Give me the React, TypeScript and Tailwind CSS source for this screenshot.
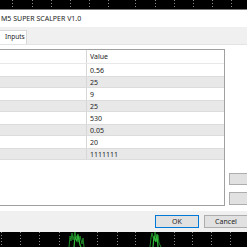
const rows = ['0.56', '25', '9', '25', '530', '0.05', '20', '1111111'];

const topLines = [12, 32, 51, 70, 89, 108, 135, 155, 174, 193, 212, 231];
const bottomLines = [1, 20, 39, 59, 97, 117, 135, 174, 192, 211, 230];

function TopBand() {
  return (
    <svg width="247" height="9" className="block shrink-0">
      <rect width="247" height="9" fill="#000" />
      {topLines.map((x) => (
        <line key={x} x1={x + 0.5} y1="0" x2={x + 0.5} y2="9" stroke="#8a8a8a" strokeDasharray="1 2" />
      ))}
    </svg>
  );
}

function Chart() {
  return (
    <svg width="247" height="15" className="block shrink-0">
      <rect width="247" height="15" fill="#000" />
      {bottomLines.map((x) => (
        <line key={x} x1={x + 0.5} y1="0" x2={x + 0.5} y2="15" stroke="#8a8a8a" strokeDasharray="1 2" />
      ))}
      <polyline points="69,15 70,4 71,9 72,1 73,8 75,0 76,6 78,2 79,10 80,4 82,12 83,6 84,15" fill="none" stroke="#1f8a28" strokeWidth="1" />
      <polyline points="74,15 75,5 77,9 78,3 80,13 81,15" fill="none" stroke="#2fb83a" strokeWidth="1.2" />
      <polyline points="150,15 151,6 152,1 154,9 155,0 156,7 158,3 159,11 161,15" fill="none" stroke="#1f8a28" strokeWidth="1" />
      <polyline points="153,15 154,4 156,10 157,2 158,15" fill="none" stroke="#2fb83a" strokeWidth="1.2" />
    </svg>
  );
}

export default function App() {
  return (
    <div className="w-[247px] h-[247px] overflow-hidden bg-black flex flex-col font-['Noto_Sans',sans-serif] text-[#1e1e1e]">
      <TopBand />
      <div className="h-px shrink-0 bg-[#7a7a7a]" />
      <div className="h-[17px] shrink-0 bg-white flex items-center pl-px text-[7px] leading-none">
        M5 SUPER SCALPER V1.0
      </div>
      <div className="h-[17px] shrink-0 bg-[#f0f0f0] flex items-end">
        <div className="h-[14px] w-[27px] bg-white border-t border-r border-[#d9d9d9] flex items-center pl-[5px] text-[6.5px] leading-none">
          Inputs
        </div>
      </div>
      <div className="flex-1 bg-white flex pt-[4px] border-t border-[#e3e3e3]">
        <div className="w-[225px] h-[157px] border-t border-r border-b border-[#a0a0a0] flex flex-col text-[7px] leading-none">
          <div className="h-[14px] flex shrink-0 border-b border-[#e8e8e8]">
            <div className="w-[87px] border-r border-[#d6d6d6]" />
            <div className="flex-1 flex items-center pl-[3px]">Value</div>
          </div>
          {rows.map((v, i) => (
            <div
              key={i}
              className={`h-[12px] flex shrink-0 ${i % 2 === 1 ? 'bg-[#e8e8e8] border-y border-[#dcdcdc]' : 'bg-white'}`}
            >
              <div className="w-[87px] border-r border-[#d6d6d6]" />
              <div className="flex-1 flex items-center pl-[3px]">{v}</div>
            </div>
          ))}
        </div>
        <div className="flex-1 flex flex-col pl-[4px] pt-[124px] gap-[7px]">
          <div className="h-[12px] bg-[#e1e1e1] border border-r-0 border-[#adadad]" />
          <div className="h-[13px] bg-[#e1e1e1] border border-r-0 border-[#adadad]" />
        </div>
      </div>
      <div className="h-[21px] shrink-0 bg-[#f0f0f0] flex items-center justify-end gap-[5px] text-[7px] leading-none">
        <div className="w-[44px] h-[13px] bg-[#e1e1e1] border border-[#0078d7] flex items-center justify-center">OK</div>
        <div className="w-[43px] h-[13px] bg-[#e1e1e1] border border-r-0 border-[#adadad] flex items-center justify-center">Cancel</div>
      </div>
      <Chart />
    </div>
  );
}
